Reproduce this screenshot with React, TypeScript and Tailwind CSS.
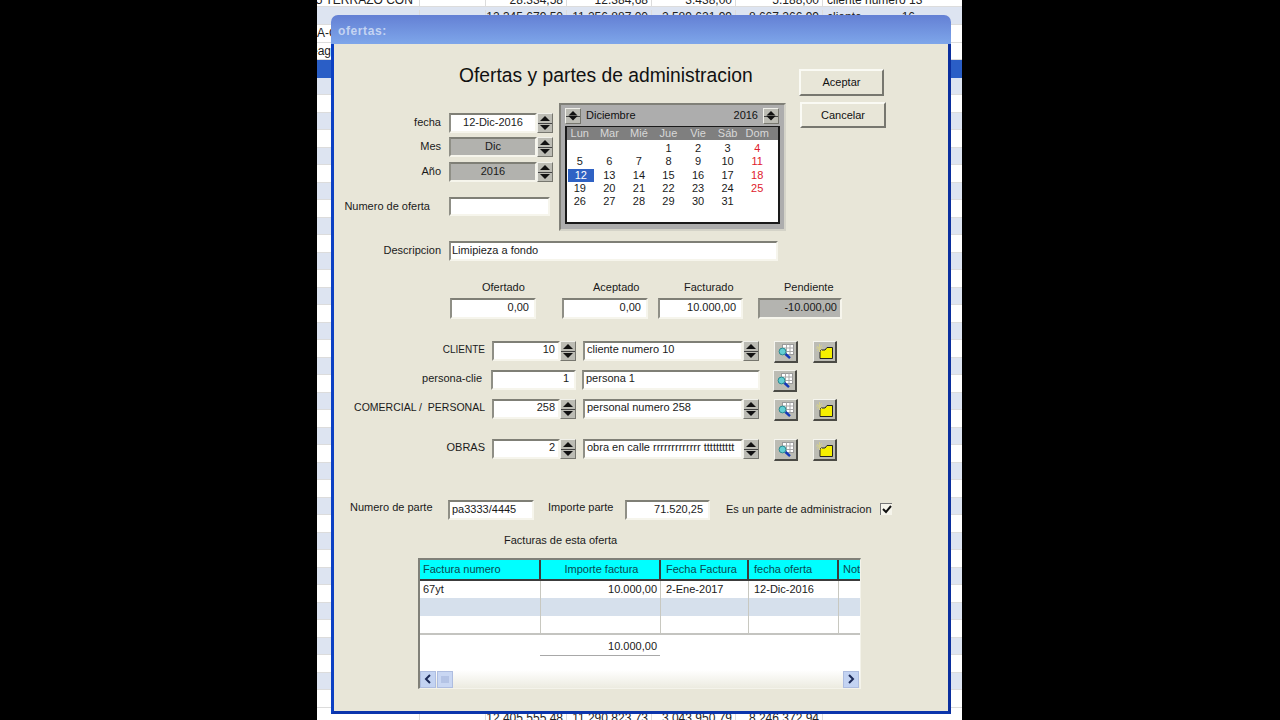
import React from 'react';

const font = { fontFamily: '"Liberation Sans", Arial, sans-serif' };

// grid that sits behind the dialog
function SheetRow({ cells, className, first = '' }: { cells: string[]; className: string; first?: string }) {
    return (
        <div className={`flex shrink-0 border-b border-[#dcdcdc] text-[12px] leading-[14px] text-[#222] overflow-hidden ${className}`}>
            <div className="w-[103px] shrink-0 border-r border-[#dcdcdc] whitespace-nowrap overflow-hidden"><div className={first}>{cells[0]}</div></div>
            <div className="w-[66px] shrink-0 border-r border-[#dcdcdc]"></div>
            <div className="w-[81px] shrink-0 border-r border-[#dcdcdc] pr-[3px] text-right whitespace-nowrap">{cells[1]}</div>
            <div className="w-[85px] shrink-0 border-r border-[#dcdcdc] pr-[3px] text-right whitespace-nowrap">{cells[2]}</div>
            <div className="w-[84px] shrink-0 border-r border-[#dcdcdc] pr-[3px] text-right whitespace-nowrap">{cells[3]}</div>
            <div className="w-[87px] shrink-0 border-r border-[#dcdcdc] pr-[3px] text-right whitespace-nowrap">{cells[4]}</div>
            <div className="flex-1 pl-[4px] whitespace-pre">{cells[5]}</div>
        </div>
    );
}

function Sheet() {
    const rows = [];
    for (let i = 4; i < 40; i++) {
        rows.push(<SheetRow key={i} cells={['', '', '', '', '', '']} className={i % 2 === 0 ? 'h-[17.5px] bg-[#dde4f1]' : 'h-[17.5px] bg-white'} />);
    }
    return (
        <div className="flex flex-col w-[645px] h-[720px] overflow-hidden bg-white">
            <div className="h-[7px] shrink-0 overflow-hidden bg-white">
                <div className="mt-[-7px]">
                    <SheetRow first="ml-[-8px]" cells={['35 TERRAZO CON', '28.334,58', '12.384,68', '3.438,00', '5.188,00', 'cliente numero 13']} className="h-[14px]" />
                </div>
            </div>
            <SheetRow cells={['', '12.345.679,50', '11.256.887,00', '2.589.621,99', '8.667.266,99', 'cliente            16']} className="h-[18px] bg-[#dde4f1] pt-[3px]" />
            <SheetRow cells={['A-O', '', '', '', '', '']} className="h-[17.5px] bg-white items-center" />
            <SheetRow first="ml-[-6px]" cells={['eag', '', '', '', '', '']} className="h-[17.5px] bg-white items-center" />
            <div className="h-[17.5px] shrink-0 bg-[#2a5ec6]"></div>
            {rows}
            <div className="shrink-0 pt-[3px]">
                <SheetRow cells={['', '12.405.555,48', '11.290.823,73', '3.043.950,79', '8.246.372,94', '']} className="h-[16px] bg-white" />
            </div>
        </div>
    );
}

function Spinner({ className }: { className: string }) {
    return (
        <div className={`w-[16px] shrink-0 bg-[#bcbcb4] border-t border-l border-t-[#f0f0ea] border-l-[#f0f0ea] border-r border-b border-r-[#77776f] border-b-[#77776f] flex flex-col items-center justify-between py-[2px] ${className}`}>
            <svg width="10" height="5" viewBox="0 0 10 5"><path d="M5 0 L10 5 L0 5 Z" fill="#111" /></svg>
            <div className="w-full h-px bg-[#444]"></div>
            <svg width="10" height="5" viewBox="0 0 10 5"><path d="M0 0 L10 0 L5 5 Z" fill="#111" /></svg>
        </div>
    );
}

function Field({ className, children }: { className: string; children?: React.ReactNode }) {
    return (
        <div className={`shrink-0 flex items-center whitespace-nowrap overflow-hidden pb-[2px] border-t-2 border-l-2 border-t-[#7f7f76] border-l-[#8f8f86] border-r-2 border-b-2 border-r-[#f6f5ec] border-b-[#f6f5ec] text-[11px] text-[#1a1a1a] ${className}`}>
            {children}
        </div>
    );
}

function ToolButton({ className = '', children }: { className?: string; children: React.ReactNode }) {
    return (
        <div className={`w-[24px] h-[22px] shrink-0 flex items-center justify-center bg-[#bcbcb4] border-t border-l border-t-[#f4f4ee] border-l-[#f4f4ee] border-r-2 border-b-2 border-r-[#4b4b45] border-b-[#4b4b45] ${className}`}>
            {children}
        </div>
    );
}

function SearchIcon() {
    return (
        <svg width="18" height="17" viewBox="0 0 18 17">
            <rect x="5.5" y="1.5" width="11" height="10" fill="#fff" stroke="#9a9a9a" />
            <path d="M9.5 1.5 V11.5 M13 1.5 V11.5 M5.5 5 H16.5 M5.5 8.5 H16.5" stroke="#a8a8a8" />
            <circle cx="5.5" cy="8.5" r="3.4" fill="#63cfd4" stroke="#2a8a90" />
            <path d="M8.5 11 L13 15.2" stroke="#1238b8" strokeWidth="2.4" />
        </svg>
    );
}

function FolderIcon() {
    return (
        <svg width="18" height="16" viewBox="0 0 18 16">
            <path d="M4 6 H9 L11 3.5 H16.5 V14.5 H4 Z" fill="#f6f000" stroke="#222" />
            <path d="M1 2 L6 7 M6 1 L1 7 M3.5 0 V8 M0 4 H7" stroke="#d4d090" strokeWidth="1" />
        </svg>
    );
}

function Button({ className, children }: { className: string; children: string }) {
    return (
        <div className={`flex items-center justify-center text-[11px] text-[#111] bg-[#e8e6d8] border-t-2 border-l-2 border-t-[#fafaf4] border-l-[#fafaf4] border-r-2 border-b-2 border-r-[#77776f] border-b-[#77776f] ${className}`}>
            {children}
        </div>
    );
}

const weeks = [
    ['', '', '', '1', '2', '3', '4'],
    ['5', '6', '7', '8', '9', '10', '11'],
    ['12', '13', '14', '15', '16', '17', '18'],
    ['19', '20', '21', '22', '23', '24', '25'],
    ['26', '27', '28', '29', '30', '31', ''],
];

function Calendar() {
    return (
        <div className="w-[227px] h-[128px] shrink-0 bg-[#adadad] border-t-2 border-l-2 border-t-[#808078] border-l-[#808078] border-r-2 border-b-2 border-r-[#d4d3c8] border-b-[#d4d3c8] pl-[4px] pt-[1px]">
            <div className="flex items-end h-[18px] w-[214px] text-[11px] text-[#111]">
                <Spinner className="h-[16px]" />
                <span className="ml-[5px] self-center">Diciembre</span>
                <span className="ml-auto mr-[5px] self-center">2016</span>
                <Spinner className="h-[16px]" />
            </div>
            <div className="mt-[2px] w-[215px] h-[98px] border-2 border-t border-[#1a1a1a] bg-white text-[11px] leading-[13.3px]">
                <div className="h-[13px] bg-[#7f7f7f] text-[#d8d8d8]">
                    <div className="grid grid-cols-7 w-[207px] ml-[-2px] text-center leading-[12px]">
                        {['Lun', 'Mar', 'Mié', 'Jue', 'Vie', 'Sáb', 'Dom'].map(d => <div key={d}>{d}</div>)}
                    </div>
                </div>
                <div className="mt-[2px]">
                    {weeks.map((w, i) => (
                        <div key={i} className="grid grid-cols-7 w-[207px] ml-[-2px] h-[13.3px] text-center text-[#1a1a1a]">
                            {w.map((d, j) => (
                                <div key={j} className={d === '12' ? 'ml-[3px] mr-[1px] bg-[#2f62c4] text-white' : j === 6 ? 'text-[#e0202c]' : ''}>{d}</div>
                            ))}
                        </div>
                    ))}
                </div>
            </div>
        </div>
    );
}

function ComboRow({ label, labelClass, value, text, mt }: { label: string; labelClass: string; value: string; text: string; mt: string }) {
    return (
        <div className={`flex items-start h-[19px] text-[11px] ${mt}`}>
            <div className={`w-[151px] shrink-0 text-right leading-[17px] whitespace-pre ${labelClass}`}>{label}</div>
            <Field className="ml-[7px] w-[68px] h-[20px] bg-white justify-end pr-[3px]"><span className="mt-[-2px]">{value}</span></Field>
            <Spinner className="h-[20px]" />
            <Field className="ml-[7px] w-[160px] h-[20px] bg-white pl-[2px]"><span className="mt-[-2px]">{text}</span></Field>
            <Spinner className="h-[20px]" />
            <ToolButton className="ml-[15px]"><SearchIcon /></ToolButton>
            <ToolButton className="ml-[15px]"><FolderIcon /></ToolButton>
        </div>
    );
}

const colClasses = ['w-[121px]', 'w-[120px]', 'w-[88px]', 'w-[90px]', 'w-[24px]'];
const headPad = ['pl-[3px]', 'pl-[3px]', 'pl-[5px]', 'pl-[5px]', 'pl-[4px]'];

function InvoiceTable() {
    const heads = ['Factura numero', 'Importe factura', 'Fecha Factura', 'fecha oferta', 'Notas'];
    return (
        <div className="ml-[84px] mt-[12px] w-[443px] h-[131px] border-t-2 border-l-2 border-t-[#808078] border-l-[#808078] border-r border-b border-r-[#f4f3ea] border-b-[#f4f3ea] bg-white text-[11px] text-[#1a1a1a] flex flex-col overflow-hidden">
            <div className="flex h-[21px] shrink-0 bg-[#00ffff] text-[#0a4a50]">
                {heads.map((h, i) => (
                    <div key={h} className={`${colClasses[i]} ${headPad[i]} shrink-0 flex items-center overflow-hidden whitespace-nowrap border-r-2 border-r-[#3c3c3c] border-b-2 border-b-[#3c3c3c] ${i === 1 ? 'justify-center' : ''}`}>{h}</div>
                ))}
            </div>
            <div className="flex h-[17px] shrink-0">
                <div className={`${colClasses[0]} shrink-0 pl-[3px] border-r border-[#c8c8c0]`}>67yt</div>
                <div className={`${colClasses[1]} shrink-0 text-right pr-[3px] border-r border-[#c8c8c0]`}>10.000,00</div>
                <div className={`${colClasses[2]} shrink-0 pl-[5px] border-r border-[#c8c8c0]`}>2-Ene-2017</div>
                <div className={`${colClasses[3]} shrink-0 pl-[5px] border-r border-[#c8c8c0]`}>12-Dic-2016</div>
            </div>
            {['h-[18px] bg-[#d6e0ec]', 'h-[17px] bg-white'].map((r, i) => (
                <div key={i} className={`flex shrink-0 ${r}`}>
                    {colClasses.map((c, j) => <div key={j} className={`${c} shrink-0 border-r border-[#c8c8c0]`}></div>)}
                </div>
            ))}
            <div className="h-[2px] shrink-0 bg-[#c4c4c0]"></div>
            <div className="ml-[120px] mt-[3px] w-[120px] h-[18px] shrink-0 text-right pr-[3px] border-b border-[#a8a8a8] leading-[16px]">10.000,00</div>
            <div className="mt-[14px] h-[18px] shrink-0 flex items-center justify-between bg-gradient-to-b from-white to-[#ecebe0] pr-[1px]">
                <div className="flex">
                    <div className="w-[16px] h-[17px] flex items-center justify-center bg-[#c3d3f2] border border-[#aebde0]">
                        <svg width="8" height="10" viewBox="0 0 8 10"><path d="M6 1 L2 5 L6 9" fill="none" stroke="#1c2a58" strokeWidth="2" /></svg>
                    </div>
                    <div className="ml-[1px] w-[16px] h-[17px] flex items-center justify-center bg-[#c9d7f3] border border-[#aebde0]">
                        <svg width="8" height="7" viewBox="0 0 8 7"><path d="M1 0 V7 M3 0 V7 M5 0 V7 M7 0 V7" stroke="#9fb0d8" /></svg>
                    </div>
                </div>
                <div className="w-[16px] h-[17px] flex items-center justify-center bg-[#c3d3f2] border border-[#aebde0]">
                    <svg width="8" height="10" viewBox="0 0 8 10"><path d="M2 1 L6 5 L2 9" fill="none" stroke="#1c2a58" strokeWidth="2" /></svg>
                </div>
            </div>
        </div>
    );
}

function Dialog() {
    return (
        <div className="absolute left-[14px] top-[15px] w-[620px] h-[699px] flex flex-col">
            <div className="h-[29px] shrink-0 rounded-t-[7px] bg-gradient-to-b from-[#6480d4] to-[#7ea6ea] pl-[7px] pt-[9px] text-[12px] leading-[14px] font-bold text-[#c4d4f2] tracking-[0.6px]">ofertas:</div>
            <div className="flex-1 bg-[#e8e6d8] border-l-[3px] border-r-[3px] border-b-[3px] border-l-[#0b40c4] border-r-[#0b2f9e] border-b-[#0b35ac] text-[#1a1a1a] text-[11px]">
                <div className="flex h-[187px]">
                    <div className="w-[465px] shrink-0">
                        <h1 className="ml-[125px] mt-[22px] h-[20px] text-[19.3px] leading-[20px] text-[#111] whitespace-nowrap">Ofertas y partes de administracion</h1>
                        <div className="flex mt-[17px]">
                            <div className="w-[225px] shrink-0 pt-[10px]">
                                <div className="flex h-[20px] items-center">
                                    <div className="w-[107px] text-right pb-[2px]">fecha</div>
                                    <Field className="ml-[8px] w-[88px] h-[20px] bg-white justify-center">12-Dic-2016</Field>
                                    <Spinner className="h-[20px]" />
                                </div>
                                <div className="flex h-[20px] items-center mt-[4px]">
                                    <div className="w-[107px] text-right pb-[2px]">Mes</div>
                                    <Field className="ml-[8px] w-[88px] h-[20px] bg-[#b2b2ae] justify-center">Dic</Field>
                                    <Spinner className="h-[20px]" />
                                </div>
                                <div className="flex h-[20px] items-center mt-[5px]">
                                    <div className="w-[107px] text-right pb-[2px]">Año</div>
                                    <Field className="ml-[8px] w-[88px] h-[20px] bg-[#b2b2ae] justify-center">2016</Field>
                                    <Spinner className="h-[20px]" />
                                </div>
                                <div className="flex h-[19px] items-center mt-[15px]">
                                    <div className="w-[96px] text-right">Numero de oferta</div>
                                    <Field className="ml-[19px] w-[101px] h-[19px] bg-white"></Field>
                                </div>
                            </div>
                            <Calendar />
                        </div>
                    </div>
                    <div className="pt-[25px]">
                        <Button className="w-[85px] h-[27px]">Aceptar</Button>
                        <Button className="w-[86px] h-[26px] mt-[6px] ml-[1px]">Cancelar</Button>
                    </div>
                </div>

                <div className="flex items-center h-[20px] mt-[10px]">
                    <div className="w-[107px] text-right pb-[2px]">Descripcion</div>
                    <Field className="ml-[8px] w-[329px] h-[20px] bg-white pl-[1px]">Limipieza a fondo</Field>
                </div>

                <div className="flex mt-[20px] ml-[116px]">
                    <div className="w-[86px] flex flex-col gap-[4px]">
                        <div className="h-[13px] leading-[13px] pl-[32px]">Ofertado</div>
                        <Field className="w-[86px] h-[21px] bg-white justify-end pr-[5px]">0,00</Field>
                    </div>
                    <div className="w-[86px] ml-[26px] flex flex-col gap-[4px]">
                        <div className="h-[13px] leading-[13px] pl-[31px]">Aceptado</div>
                        <Field className="w-[86px] h-[21px] bg-white justify-end pr-[5px]">0,00</Field>
                    </div>
                    <div className="w-[85px] ml-[10px] flex flex-col gap-[4px]">
                        <div className="h-[13px] leading-[13px] pl-[26px]">Facturado</div>
                        <Field className="w-[85px] h-[21px] bg-white justify-end pr-[5px]">10.000,00</Field>
                    </div>
                    <div className="w-[84px] ml-[15px] flex flex-col gap-[4px]">
                        <div className="h-[13px] leading-[13px] pl-[26px]">Pendiente</div>
                        <Field className="w-[84px] h-[21px] bg-[#b4b4b0] justify-end pr-[3px]">-10.000,00</Field>
                    </div>
                </div>

                <ComboRow mt="mt-[22px]" label="CLIENTE" labelClass="text-[10px]" value="10" text="cliente numero 10" />

                <div className="flex items-start h-[19px] mt-[10px]">
                    <div className="w-[148px] shrink-0 text-right leading-[17px]">persona-clie</div>
                    <Field className="ml-[9px] w-[85px] h-[20px] bg-white justify-end pr-[5px]"><span className="mt-[-2px]">1</span></Field>
                    <Field className="ml-[6px] w-[178px] h-[20px] bg-white pl-[2px]"><span className="mt-[-2px]">persona 1</span></Field>
                    <ToolButton className="ml-[13px]"><SearchIcon /></ToolButton>
                </div>

                <ComboRow mt="mt-[10px]" label="COMERCIAL /  PERSONAL" labelClass="text-[10.5px]" value="258" text="personal numero 258" />
                <ComboRow mt="mt-[21px]" label="OBRAS" labelClass="text-[11px]" value="2" text="obra en calle rrrrrrrrrrrrr tttttttttt" />

                <div className="flex items-start h-[19px] mt-[42px] pl-[16px]">
                    <div className="w-[98px] shrink-0 leading-[14px]">Numero de parte</div>
                    <Field className="w-[86px] h-[20px] bg-white pl-[2px]">pa3333/4445</Field>
                    <div className="w-[77px] shrink-0 ml-[14px] leading-[14px]">Importe parte</div>
                    <Field className="w-[85px] h-[20px] bg-white justify-end pr-[5px]">71.520,25</Field>
                    <div className="w-[154px] shrink-0 ml-[16px] leading-[19px] whitespace-nowrap">Es un parte de administracion</div>
                    <div className="w-[12px] h-[12px] shrink-0 mt-[3px] bg-[#f6f5ec] border-t border-l border-[#777] flex items-center justify-center">
                        <svg width="10" height="9" viewBox="0 0 10 9"><path d="M1 4 L4 7 L9 1" fill="none" stroke="#111" strokeWidth="2" /></svg>
                    </div>
                </div>

                <div className="ml-[170px] mt-[15px] h-[12px] leading-[12px] whitespace-nowrap">Facturas de esta oferta</div>
                <InvoiceTable />
            </div>
        </div>
    );
}

export default function App() {
    return (
        <div className="w-[1280px] h-[720px] bg-black flex overflow-hidden" style={font}>
            <div className="w-[317px] shrink-0"></div>
            <div className="relative w-[645px] h-[720px] shrink-0 overflow-hidden">
                <Sheet />
                <Dialog />
            </div>
        </div>
    );
}
